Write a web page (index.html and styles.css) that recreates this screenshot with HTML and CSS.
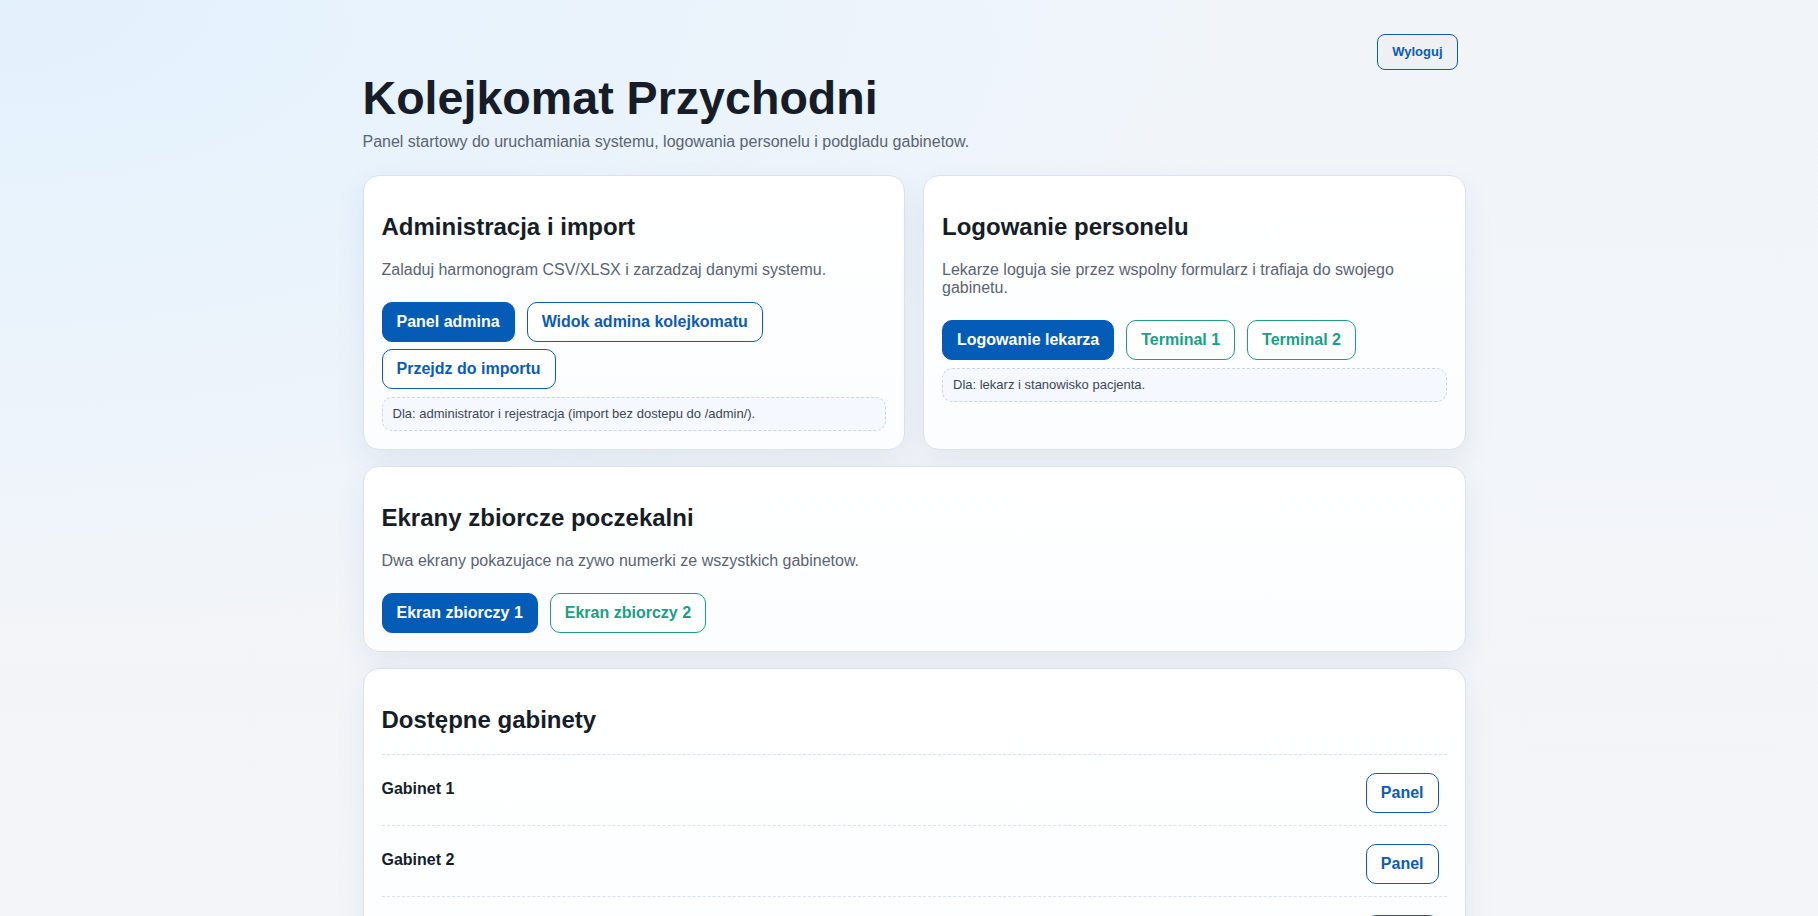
FILE: index.html
```html
<!DOCTYPE html>
<html lang="pl">
<head>
    <meta charset="UTF-8">
    <meta name="viewport" content="width=device-width, initial-scale=1.0">
    <title>Kolejkomat Przychodni</title>
    <link rel="stylesheet" href="styles.css">
</head>
<body>
    <div class="page">
        <header class="topbar">
            <button class="logout" type="button">Wyloguj</button>
        </header>

        <h1 class="title">Kolejkomat Przychodni</h1>
        <p class="lead">Panel startowy do uruchamiania systemu, logowania personelu i podgladu gabinetow.</p>

        <div class="grid">
            <section class="card">
                <h2>Administracja i import</h2>
                <p class="desc">Zaladuj harmonogram CSV/XLSX i zarzadzaj danymi systemu.</p>
                <div class="actions">
                    <a class="btn btn-primary" href="#">Panel admina</a>
                    <a class="btn btn-outline" href="#">Widok admina kolejkomatu</a>
                    <a class="btn btn-outline" href="#">Przejdz do importu</a>
                </div>
                <div class="note">Dla: administrator i rejestracja (import bez dostepu do /admin/).</div>
            </section>

            <section class="card">
                <h2>Logowanie personelu</h2>
                <p class="desc">Lekarze loguja sie przez wspolny formularz i trafiaja do swojego gabinetu.</p>
                <div class="actions">
                    <a class="btn btn-primary" href="#">Logowanie lekarza</a>
                    <a class="btn btn-teal" href="#">Terminal 1</a>
                    <a class="btn btn-teal" href="#">Terminal 2</a>
                </div>
                <div class="note">Dla: lekarz i stanowisko pacjenta.</div>
            </section>

            <section class="card card-wide">
                <h2>Ekrany zbiorcze poczekalni</h2>
                <p class="desc">Dwa ekrany pokazujace na zywo numerki ze wszystkich gabinetow.</p>
                <div class="actions">
                    <a class="btn btn-primary" href="#">Ekran zbiorczy 1</a>
                    <a class="btn btn-teal" href="#">Ekran zbiorczy 2</a>
                </div>
            </section>

            <section class="card card-wide">
                <h2>Dostępne gabinety</h2>
                <ul class="rooms">
                    <li class="room">
                        <span class="room-name">Gabinet 1</span>
                        <a class="btn btn-outline" href="#">Panel</a>
                    </li>
                    <li class="room">
                        <span class="room-name">Gabinet 2</span>
                        <a class="btn btn-outline" href="#">Panel</a>
                    </li>
                    <li class="room">
                        <span class="room-name">Gabinet 3</span>
                        <a class="btn btn-outline" href="#">Panel</a>
                    </li>
                    <li class="room">
                        <span class="room-name">Gabinet 4</span>
                        <a class="btn btn-outline" href="#">Panel</a>
                    </li>
                </ul>
            </section>
        </div>
    </div>
</body>
</html>
```

FILE: styles.css
```css
html{
    min-height: 100%;
    background:
        radial-gradient(ellipse at 0 0, #e3f1fd 0%, rgba(227,241,253,0) 50%),
        linear-gradient(180deg, #f1f5fa 0%, #f3f5f8 100%);
    background-attachment: fixed;
}
body{
    margin: 0;
    padding: 34px 0 40px 10px;
    font-family: "Liberation Sans", Arial, sans-serif;
    color: #161d28;
}
.page{
    width: 1103px;
    margin: 0 auto;
}
.topbar{
    display: flex;
    justify-content: flex-end;
    padding-right: 8px;
}
.logout{
    font-family: inherit;
    font-size: 13px;
    font-weight: bold;
    line-height: 16px;
    padding: 9px 14px;
    color: #0b5cb5;
    background: #eef0f3;
    border: 1px solid #0b5cb5;
    border-radius: 8px;
    cursor: pointer;
}
.title{
    margin: 1px 0 0;
    font-size: 46.6px;
    font-weight: bold;
    color: #161d28;
}
.lead{
    margin: 8px 0 24px;
    font-size: 16px;
    color: #5a6474;
}
.grid{
    display: grid;
    grid-template-columns: 1fr 1fr;
    gap: 16px 18px;
}
.card{
    padding: 18px;
    background: linear-gradient(180deg, #ffffff 0%, #fbfdff 100%);
    border: 1px solid #d9e2ed;
    border-radius: 16px;
    box-shadow: 0 12px 32px rgba(30, 60, 110, 0.07);
}
.card-wide{
    grid-column: 1 / -1;
}
.card h2{
    margin: 19px 0 20px;
    font-size: 24px;
    font-weight: bold;
    color: #161d28;
}
.desc{
    margin: 0;
    font-size: 16px;
    color: #5a6474;
}
.actions{
    display: flex;
    flex-wrap: wrap;
    gap: 7px 12px;
    margin-top: 23px;
}
.btn{
    display: inline-block;
    padding: 10px 14px;
    font-size: 16px;
    font-weight: bold;
    line-height: 18px;
    text-decoration: none;
    border: 1px solid transparent;
    border-radius: 10px;
}
.btn-primary{
    background: #055cb7;
    border-color: #055cb7;
    color: #fff;
}
.btn-outline{
    background: #fff;
    border-color: #0b5cb5;
    color: #0b5cb5;
}
.btn-teal{
    background: #fff;
    border-color: #17a086;
    color: #17a086;
}
.note{
    margin-top: 8px;
    padding: 8px 10px;
    font-size: 13px;
    line-height: 16px;
    color: #3b4656;
    background: #f5f8fe;
    border: 1px dashed #c8d6e8;
    border-radius: 10px;
}
.rooms{
    list-style: none;
    margin: 0;
    padding: 0;
}
.room{
    display: flex;
    justify-content: space-between;
    align-items: flex-start;
    padding: 18px 8px 12px 0;
    border-top: 1px dashed #d8e1ec;
}
.room-name{
    margin-top: 7px;
    font-size: 16px;
    font-weight: bold;
    color: #161d28;
}
```
